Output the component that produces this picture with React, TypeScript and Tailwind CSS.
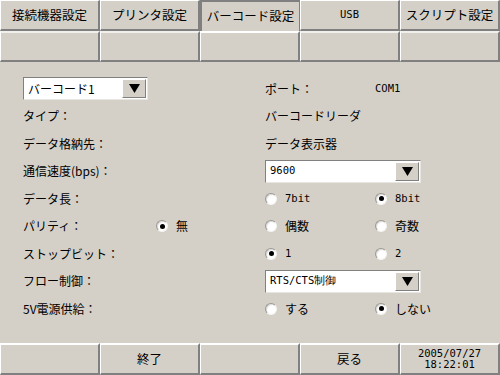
const jp = { fontFamily: '"Noto Sans CJK JP", "DejaVu Sans", sans-serif' };
const mono = { fontFamily: '"DejaVu Sans Mono", "Liberation Mono", monospace' };

const tabs = ["接続機器設定", "プリンタ設定", "バーコード設定", "USB", "スクリプト設定"];

function Radio({ checked, label, latin }: { checked?: boolean; label: string; latin?: boolean }) {
  return (
    <div className="flex items-center gap-2">
      <div className="w-3 h-3 rounded-full bg-white border border-t-[#9a9890] border-l-[#9a9890] border-b-[#f4f3f0] border-r-[#f4f3f0] flex items-center justify-center shadow-[inset_1px_1px_1px_rgba(0,0,0,0.15)]">
        {checked && <div className="w-[5px] h-[5px] rounded-full bg-black" />}
      </div>
      <span className={latin ? "text-[10.5px] font-light" : "text-[12px]"} style={latin ? mono : jp}>
        {label}
      </span>
    </div>
  );
}

function Select({ value, width, latin }: { value: string; width: string; latin?: boolean }) {
  return (
    <div className={`${width} h-[23px] flex bg-white border border-t-[#808080] border-l-[#808080] border-b-[#e8e6e0] border-r-[#e8e6e0]`}>
      <div className="flex-1 flex items-center pl-1 overflow-hidden">
        <span className={latin ? "text-[10.5px] font-light" : "text-[12px]"} style={latin ? mono : jp}>
          {value}
        </span>
      </div>
      <div className="w-6 m-px bg-[#d4d0c8] border border-t-white border-l-white border-b-[#808080] border-r-[#808080] flex items-center justify-center">
        <svg width="11" height="9" viewBox="0 0 11 9">
          <path d="M0 0 H11 L5.5 9 Z" fill="#000" />
        </svg>
      </div>
    </div>
  );
}

function Label({ children }: { children: React.ReactNode }) {
  return (
    <div className="text-[12px] flex items-center" style={jp}>
      {children}
    </div>
  );
}

export default function App() {
  return (
    <div className="w-[500px] h-[375px] bg-[#d4d0c8] flex flex-col text-black overflow-hidden">
      {/* tabs */}
      <div className="grid grid-cols-5 h-[31px]">
        {tabs.map((t, i) =>
          i === 2 ? (
            <div
              key={t}
              className="flex items-center justify-center border-t-2 border-l-2 border-t-[#808080] border-l-[#808080] border-r border-r-[#808080]"
            >
              <span className="text-[12.5px]" style={jp}>{t}</span>
            </div>
          ) : (
            <div
              key={t}
              className="flex items-center justify-center border-t border-l border-t-white border-l-white border-b-2 border-r-2 border-b-[#808080] border-r-[#808080]"
            >
              <span className={t === "USB" ? "text-[10.5px] font-light" : "text-[12.5px]"} style={t === "USB" ? mono : jp}>
                {t}
              </span>
            </div>
          )
        )}
      </div>
      <div className="grid grid-cols-5 h-[31px]">
        {tabs.map((t, i) => (
          <div
            key={t}
            className={`border-t-2 border-l border-t-[#f0efeb] border-l-white border-b-2 border-r-2 border-b-[#808080] border-r-[#808080] ${i === 2 ? "border-t-white" : ""}`}
          />
        ))}
      </div>

      {/* settings */}
      <div className="flex-1 pt-[13px] pl-[23px] grid grid-cols-[133px_109px_110px_1fr] auto-rows-[27.5px]">
        <div className="col-span-2 flex items-center">
          <Select value="バーコード1" width="w-[125px]" />
        </div>
        <Label>ポート：</Label>
        <div className="flex items-center text-[10.5px] font-light" style={mono}>COM1</div>

        <Label>タイプ：</Label>
        <div />
        <div className="col-span-2 text-[12px] flex items-center" style={jp}>バーコードリーダ</div>

        <Label>データ格納先：</Label>
        <div />
        <div className="col-span-2 text-[12px] flex items-center" style={jp}>データ表示器</div>

        <Label>通信速度(bps)：</Label>
        <div />
        <div className="col-span-2 flex items-center">
          <Select value="9600" width="w-[156px]" latin />
        </div>

        <Label>データ長：</Label>
        <div />
        <div className="flex items-center"><Radio label="7bit" latin /></div>
        <div className="flex items-center"><Radio label="8bit" latin checked /></div>

        <Label>パリティ：</Label>
        <div className="flex items-center"><Radio label="無" checked /></div>
        <div className="flex items-center"><Radio label="偶数" /></div>
        <div className="flex items-center"><Radio label="奇数" /></div>

        <Label>ストップビット：</Label>
        <div />
        <div className="flex items-center"><Radio label="1" latin checked /></div>
        <div className="flex items-center"><Radio label="2" latin /></div>

        <Label>フロー制御：</Label>
        <div />
        <div className="col-span-2 flex items-center">
          <Select value="RTS/CTS制御" width="w-[156px]" latin />
        </div>

        <Label>5V電源供給：</Label>
        <div />
        <div className="flex items-center"><Radio label="する" /></div>
        <div className="flex items-center"><Radio label="しない" checked /></div>
      </div>

      {/* bottom bar */}
      <div className="grid grid-cols-5 h-[32px]">
        {["", "終了", "", "戻る", "date"].map((b, i) => (
          <div
            key={i}
            className="flex items-center justify-center border-t-2 border-l border-t-white border-l-white border-b-2 border-r-2 border-b-[#808080] border-r-[#808080]"
          >
            {b === "date" ? (
              <div className="flex flex-col items-center text-[10.5px] font-light leading-[11px]" style={mono}>
                <span>2005/07/27</span>
                <span>18:22:01</span>
              </div>
            ) : (
              <span className="text-[12.5px]" style={jp}>{b}</span>
            )}
          </div>
        ))}
      </div>
    </div>
  );
}
